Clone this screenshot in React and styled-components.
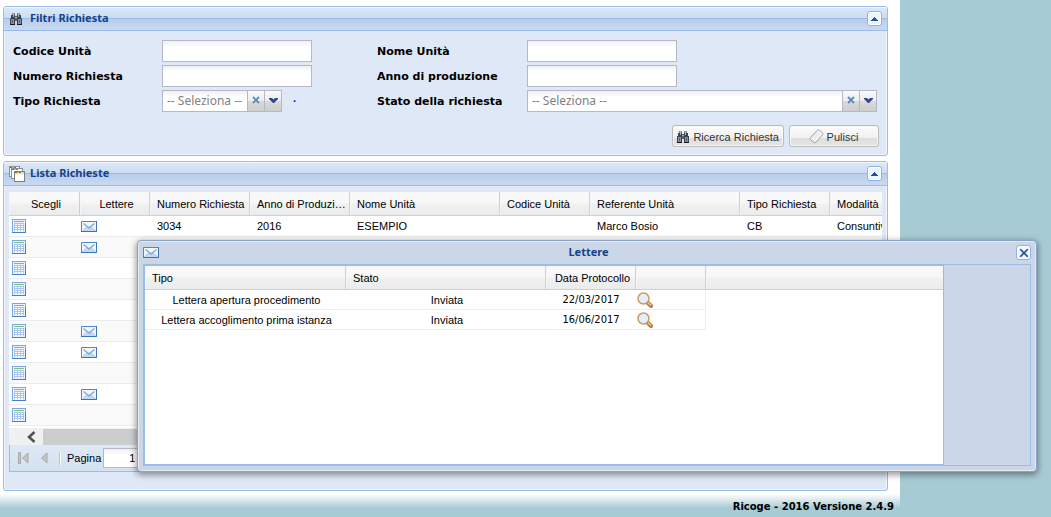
import React, { useState } from 'react';
import styled, { createGlobalStyle, css } from 'styled-components';

const GlobalStyle = createGlobalStyle`
* {
  box-sizing: border-box;
}
body {
  margin: 0;
  background-color: #a7cbd4;
  font-family: "Liberation Sans", Arial, sans-serif;
  font-size: 11px;
  color: black;
}
button, input, select {
  font-family: inherit;
  font-size: 11px;
  margin: 0;
}
`
const Page = styled.div`
position: relative;
min-height: 100vh;
`
const Column = styled.main`
display: flex;
flex-direction: column;
gap: 5px;
width: 86%;
max-width: 900px;
min-width: 900px;
padding: 6px 12px 0 3px;
background-color: white;
`
const Panel = styled.section`
border: 1px solid #99bce8;
border-radius: 3px;
background-color: #dfe8f6;
box-shadow: inset -1px -1px 0 #f2f6fc, inset 1px 0 0 #f2f6fc;
`
const PanelHeader = styled.header`
display: flex;
align-items: center;
gap: 5px;
height: 24px;
padding: 0 5px;
border-bottom: 1px solid #99bce8;
border-radius: 2px 2px 0 0;
background: linear-gradient(#dce9f8 0, #cbddf3 11px, #99bce8 11px, #99bce8 12px, #b7cdec 12px, #c9daf1 100%);
box-shadow: inset 0 1px 0 #f2f6fc;
`
const HeaderIcon = styled.span`
display: flex;
width: 16px;
`
const PanelTitle = styled.h2`
flex: 1;
margin: 0;
padding-bottom: 2px;
font: bold 11px/16px "Noto Sans", Tahoma, sans-serif;
color: #15428b;
`
const ToolButton = styled.button`
display: flex;
align-items: center;
justify-content: center;
width: 15px;
height: 15px;
padding: 0;
border: 1px solid #8db2e3;
border-radius: 3px;
background-color: #eaf5fe;
box-shadow: inset 0 0 0 1px white;
`
const FilterForm = styled.form`
padding: 9px 8px 8px 9px;
`
const FilterGrid = styled.div`
display: grid;
grid-template-columns: 149px 215px 150px 1fr;
row-gap: 3px;
padding-right: 2px;
`
const Label = styled.label`
padding-top: 2px;
font: bold 11px/20px "DejaVu Sans", Verdana, sans-serif;
`
const fieldStyle = css`
height: 22px;
border: 1px solid #b5b8c8;
background: linear-gradient(#eef0f0, white 6px);
`
const TextInput = styled.input`
${fieldStyle}
width: 150px;
padding: 1px 4px;
`
const Combo = styled.div`
display: flex;
width: ${props => props.$wide ? '100%' : '120px'};
`
const ComboSelect = styled.select`
${fieldStyle}
flex: 1;
min-width: 0;
padding: 0 4px;
border-radius: 0;
appearance: none;
font-family: "Noto Sans", Tahoma, sans-serif;
font-size: 12px;
line-height: 18px;
color: gray;
`
const Trigger = styled.button`
display: flex;
align-items: center;
justify-content: center;
width: 17px;
height: 22px;
padding: 0 0 2px;
border: 1px solid #b5b8c8;
border-left: 0;
background: linear-gradient(#fbfbfb, #ececec 10px, #dadada 10px, #cecece);
`
const Dot = styled.span`
margin-left: 11px;
font-weight: bold;
line-height: 22px;
color: #0000ff;
`
const ComboRow = styled.div`
display: flex;
`
const Actions = styled.div`
display: flex;
justify-content: flex-end;
gap: 5px;
margin-top: 13px;
`
const ActionButton = styled.button`
display: flex;
align-items: center;
justify-content: center;
gap: 3px;
height: 22px;
min-width: 90px;
padding: 1px 4px 0 3px;
border: 1px solid #bbb;
border-radius: 3px;
background: linear-gradient(#fcfcfc, #f0f0f0 12px, #dedede 12px, #e4e4e4);
box-shadow: inset 0 0 0 1px #f8f8f8;
color: #333;
white-space: nowrap;
`
const ListBody = styled.div`
padding: 6px 5px 18px;
`
const GridScroll = styled.div`
overflow: hidden;
background-color: white;
`
const Table = styled.table`
width: ${props => props.$width};
border-collapse: separate;
border-spacing: 0;
table-layout: fixed;
`
const Th = styled.th`
height: 24px;
padding: 0 3px 0 7px;
border-right: 1px solid #d0d0d0;
border-bottom: 1px solid #d0d0d0;
background: linear-gradient(#f9f9f9 0, #f7f7f7 11px, #f0f1f1 12px, #eaebec 100%);
box-shadow: inset 1px 0 0 #f6f6f6;
font-weight: normal;
text-align: ${props => props.$center ? 'center' : 'left'};
overflow: hidden;
white-space: nowrap;
text-overflow: ${props => props.$clip ? 'clip' : 'ellipsis'};
&:last-child {
  border-right: 0;
}
`
const Td = styled.td`
height: ${props => props.$height || '21px'};
padding: ${props => props.$pad || '0 5px 0 7px'};
border-bottom: 1px solid #ededed;
border-right: ${props => props.$edge ? '1px solid #ededed' : '0'};
text-align: ${props => props.$center ? 'center' : 'left'};
overflow: hidden;
white-space: nowrap;
vertical-align: middle;
svg {
  display: block;
}
`
const Tr = styled.tr`
background-color: ${props => props.$alt ? '#fafafa' : 'white'};
`
const ScrollBar = styled.div`
display: flex;
align-items: center;
height: 19px;
padding: 1px 17px;
border-top: 2px solid white;
background-color: #f0f0f0;
`
const ScrollThumb = styled.div`
width: 640px;
height: 16px;
margin-left: 7px;
background-color: #cdcdcd;
`
const Pager = styled.nav`
display: flex;
align-items: center;
height: 27px;
padding: 0 8px;
border: 1px solid #99bce8;
border-top: 0;
background: linear-gradient(#dfe9f5, #d3e1f1);
`
const PagerButton = styled.button`
display: flex;
padding: 0;
margin-right: ${props => props.$gap};
border: 0;
background: none;
`
const Separator = styled.span`
width: 2px;
height: 13px;
margin-right: 6px;
border-left: 1px solid #98c8ff;
border-right: 1px solid white;
`
const PageInput = styled.input`
${fieldStyle}
width: 36px;
height: 20px;
margin-left: 2px;
padding: 0 3px;
text-align: right;
`
const Footer = styled.footer`
width: 900px;
height: 26px;
padding: 9px 6px 0 0;
background: linear-gradient(white 3px, #a7cbd4 17px);
font: bold 10px/14px "DejaVu Sans", Verdana, sans-serif;
text-align: right;
`
const Window = styled.div`
position: absolute;
top: 240px;
left: 137px;
right: 14px;
display: flex;
flex-direction: column;
padding: 0 5px 5px;
border: 1px solid #8ba4c4;
border-radius: 4px;
background-color: #cbd7e7;
box-shadow: inset 0 0 0 1px #e3eaf4, 0 2px 6px 1px rgba(0, 0, 0, 0.4);
`
const WindowHeader = styled.header`
display: flex;
align-items: center;
height: 23px;
`
const WindowTitle = styled.h2`
flex: 1;
margin: 0;
padding: 0 0 2px 2px;
font: bold 11px/16px "Noto Sans", Tahoma, sans-serif;
text-align: center;
color: #15428b;
`
const WindowBody = styled.div`
display: flex;
border: 1px solid #99bce8;
`
const LetterGrid = styled.div`
flex: 0 1 800px;
height: 200px;
border: 1px solid #99bce8;
background-color: white;
`
const DateText = styled.span`
font-family: "DejaVu Sans Condensed", Tahoma, sans-serif;
`
const IconButton = styled.button`
display: block;
padding: 0;
border: 0;
background: none;
`

const Binoculars = () => (
  <svg width="14" height="14" viewBox="0 0 14 14" shapeRendering="crispEdges">
    <path d="M3 1h3v2H3zM8 1h3v2H8z" fill="#7d8793" />
    <path d="M2 3h4v3H2zM8 3h4v3H8zM1 6h5v7H1zM8 6h5v7H8z" fill="#3c444e" />
    <path d="M6 4h2v5H6z" fill="#59636f" />
    <path d="M4 1h1v4H4zM9 1h1v4H9zM6 5h2v1H6z" fill="#aab4bf" />
    <path d="M2 7h3v5H2zM9 7h3v5H9z" fill="#87919c" />
    <path d="M3 8h1v3H3zM10 8h1v3h-1z" fill="#5a636d" />
    <path d="M1 12h5v1H1zM8 12h5v1H8z" fill="#14181c" />
  </svg>
);

const Eraser = () => (
  <svg width="15" height="15" viewBox="0 0 15 15">
    <path d="M8.500 1.200Q9.500.5 10.300 1.200L13.500 3.700q.8.800.2 1.700L7 13.300q-1 .9-2 .2L1.300 10.500q-.8-.8-.1-1.700z" fill="#ececec" stroke="#a4a4a4" />
    <path d="M9.500 2.500l3 2.200-6.500 7.500" fill="none" stroke="#fff" />
  </svg>
);

const CardStack = () => (
  <svg width="16" height="16" viewBox="0 0 16 16" shapeRendering="crispEdges">
    <path d="M0 0h11v11H0z" fill="#8b9096" />
    <path d="M1 1h9v9H1z" fill="#fff" />
    <path d="M2 2h12v11H2z" fill="#8b9096" />
    <path d="M3 3h10v9H3z" fill="#fff" />
    <path d="M5 5h11v11H5z" fill="#7b8087" />
    <path d="M6 6h9v9H6z" fill="#fff" />
    <path d="M6 6h9v2H6z" fill="#d5dbe2" />
    <path d="M1 1h2v1H1zM3 3h2v1H3zM6 6h2v1H6z" fill="#e2412c" />
    <path d="M3 1h2v1H3zM5 3h2v1H5zM8 6h2v1H8z" fill="#e7bf38" />
    <path d="M5 1h2v1H5zM7 3h2v1H7zM10 6h2v1h-2z" fill="#46a832" />
  </svg>
);

const Mail = () => (
  <svg width="16" height="11" viewBox="0 0 16 11">
    <path d="M.5.500h15v10H.5z" fill="#f1f6fd" stroke="#4f88c7" />
    <path d="M1 10l5-4.500h4l5 4.500z" fill="#c3d9f4" />
    <path d="M2.500 2.500L8 7l5.500-4.500" fill="none" stroke="#82abdd" strokeWidth="1.500" />
    <path d="M2 9.500L5 6.500M14 9.500l-3-3" fill="none" stroke="#a8c6eb" />
    <path d="M15.500 0v10.500H0" fill="none" stroke="#3b74b8" />
  </svg>
);

const Sheet = () => (
  <svg width="14" height="14" viewBox="0 0 14 14" shapeRendering="crispEdges">
    <path d="M0 0h14v14H0z" fill="#7ba7dc" />
    <path d="M1 1h12v12H1z" fill="#eaf2fd" />
    <path d="M2 2h10v1H2z" fill="#7fc178" />
    <path d="M2 4h10v8H2z" fill="#a9c5ec" />
    <path d="M3 5h2v1H3zM6 5h2v1H6zM9 5h2v1H9zM3 7h2v1H3zM6 7h2v1H6zM9 7h2v1H9zM3 9h2v1H3zM6 9h2v1H6zM9 9h2v1H9zM3 11h2v1H3zM6 11h2v1H6zM9 11h2v1H9z" fill="#fff" />
    <path d="M0 13h14v1H0zM13 4h1v9h-1z" fill="#477fc5" />
  </svg>
);

const Magnifier = () => (
  <svg width="16" height="16" viewBox="0 0 16 16">
    <path d="M10 10l4 4" stroke="#b67a45" strokeWidth="4" strokeLinecap="round" />
    <path d="M11 10.500l3 3" stroke="#efc98b" strokeWidth="1.500" />
    <circle cx="6.500" cy="6.500" r="5.500" fill="#e4effb" stroke="#c99c62" strokeWidth="1.500" />
  </svg>
);

const UpArrow = () => (
  <svg width="7" height="4" viewBox="0 0 7 4" shapeRendering="crispEdges">
    <path d="M3 0h1v1h1v1h1v1h1v1H0V3h1V2h1V1h1z" fill="#2b4fa0" />
  </svg>
);

const Cross = ({ size, color, weight }) => (
  <svg width={size} height={size} viewBox="0 0 8 8">
    <path d="M1 1l6 6M7 1L1 7" stroke={color} strokeWidth={weight} />
  </svg>
);

const Chevron = () => (
  <svg width="9" height="5" viewBox="0 0 9 5">
    <path d="M0 0h3l1.500 1.500L6 0h3v1L5 5H4L0 1z" fill="#2b4a87" />
  </svg>
);

const columns = [
  { title: 'Scegli', width: 71, center: true },
  { title: 'Lettere', width: 70, center: true },
  { title: 'Numero Richiesta', width: 100, clip: true },
  { title: 'Anno di Produzione', width: 100 },
  { title: 'Nome Unità', width: 150 },
  { title: 'Codice Unità', width: 90 },
  { title: 'Referente Unità', width: 150 },
  { title: 'Tipo Richiesta', width: 90 },
  { title: 'Modalità', width: 120 },
];

const requests = [
  { id: 1, mail: true, values: ['3034', '2016', 'ESEMPIO', '', 'Marco Bosio', 'CB', 'Consuntivo'] },
  { id: 2, mail: true },
  { id: 3 },
  { id: 4 },
  { id: 5 },
  { id: 6, mail: true },
  { id: 7, mail: true },
  { id: 8 },
  { id: 9, mail: true },
  { id: 10 },
];

const letters = [
  { type: 'Lettera apertura procedimento', state: 'Inviata', date: '22/03/2017' },
  { type: 'Lettera accoglimento prima istanza', state: 'Inviata', date: '16/06/2017' },
];

const SelectField = ({ id, wide }) => (
  <Combo $wide={wide}>
    <ComboSelect id={id}>
      <option>-- Seleziona --</option>
    </ComboSelect>
    <Trigger type="button" aria-label="Annulla selezione"><Cross size={8} color="#5a8cc4" weight="1.800" /></Trigger>
    <Trigger type="button" aria-label="Apri elenco"><Chevron /></Trigger>
  </Combo>
);

const Filters = () => (
  <Panel>
    <PanelHeader>
      <HeaderIcon><Binoculars /></HeaderIcon>
      <PanelTitle>Filtri Richiesta</PanelTitle>
      <ToolButton aria-label="Comprimi"><UpArrow /></ToolButton>
    </PanelHeader>
    <FilterForm onSubmit={e => e.preventDefault()}>
      <FilterGrid>
        <Label htmlFor="codice">Codice Unità</Label>
        <TextInput id="codice" />
        <Label htmlFor="nome">Nome Unità</Label>
        <TextInput id="nome" />
        <Label htmlFor="numero">Numero Richiesta</Label>
        <TextInput id="numero" />
        <Label htmlFor="anno">Anno di produzione</Label>
        <TextInput id="anno" />
        <Label htmlFor="tipo">Tipo Richiesta</Label>
        <ComboRow>
          <SelectField id="tipo" />
          <Dot>·</Dot>
        </ComboRow>
        <Label htmlFor="stato">Stato della richiesta</Label>
        <SelectField id="stato" wide />
      </FilterGrid>
      <Actions>
        <ActionButton><Binoculars />Ricerca Richiesta</ActionButton>
        <ActionButton type="reset"><Eraser />Pulisci</ActionButton>
      </Actions>
    </FilterForm>
  </Panel>
);

const RequestList = () => (
  <Panel>
    <PanelHeader>
      <HeaderIcon><CardStack /></HeaderIcon>
      <PanelTitle>Lista Richieste</PanelTitle>
      <ToolButton aria-label="Comprimi"><UpArrow /></ToolButton>
    </PanelHeader>
    <ListBody>
      <GridScroll>
        <Table $width="941px">
          <colgroup>
            {columns.map(c => <col key={c.title} width={c.width} />)}
          </colgroup>
          <thead>
            <tr>
              {columns.map(c => <Th key={c.title} $center={c.center} $clip={c.clip}>{c.title}</Th>)}
            </tr>
          </thead>
          <tbody>
            {requests.map((r, i) => (
              <Tr key={r.id} $alt={i % 2 === 1}>
                <Td $pad="0 3px"><IconButton aria-label="Scegli"><Sheet /></IconButton></Td>
                <Td $pad="0 1px">{r.mail && <IconButton aria-label="Lettere"><Mail /></IconButton>}</Td>
                {columns.slice(2).map((c, j) => <Td key={c.title}>{r.values && r.values[j]}</Td>)}
              </Tr>
            ))}
          </tbody>
        </Table>
      </GridScroll>
      <ScrollBar>
        <svg width="10" height="12" viewBox="0 0 10 12">
          <path d="M8.500 1L3 6l5.500 5" fill="none" stroke="#505050" strokeWidth="2.500" />
        </svg>
        <ScrollThumb />
      </ScrollBar>
      <Pager>
        <PagerButton $gap="12px" aria-label="Prima pagina">
          <svg width="11" height="12" viewBox="0 0 11 12">
            <path d="M.5.500h2v11h-2z" fill="#c8c8c8" stroke="#a8a8a8" />
            <path d="M10 1v10L4.500 6z" fill="#c4c4c4" stroke="#a8a8a8" />
          </svg>
        </PagerButton>
        <PagerButton $gap="11px" aria-label="Pagina precedente">
          <svg width="7" height="12" viewBox="0 0 7 12">
            <path d="M6 1v10L.5 6z" fill="#c4c4c4" stroke="#a8a8a8" />
          </svg>
        </PagerButton>
        <Separator />
        <label htmlFor="pagina">Pagina</label>
        <PageInput id="pagina" defaultValue="1" />
      </Pager>
    </ListBody>
  </Panel>
);

const LettersWindow = ({ onClose }) => (
  <Window role="dialog" aria-labelledby="lettere-title">
    <WindowHeader>
      <Mail />
      <WindowTitle id="lettere-title">Lettere</WindowTitle>
      <ToolButton aria-label="Chiudi" onClick={onClose}><Cross size={10} color="#2b4fa0" weight="1.400" /></ToolButton>
    </WindowHeader>
    <WindowBody>
      <LetterGrid>
        <Table $width="100%">
          <colgroup>
            <col width="201" />
            <col width="200" />
            <col width="90" />
            <col width="70" />
            <col />
          </colgroup>
          <thead>
            <tr>
              <Th>Tipo</Th>
              <Th>Stato</Th>
              <Th $center>Data Protocollo</Th>
              <Th />
              <Th />
            </tr>
          </thead>
          <tbody>
            {letters.map(l => (
              <tr key={l.date}>
                <Td $center $height="20px">{l.type}</Td>
                <Td $center $height="20px">{l.state}</Td>
                <Td $center $pad="0 6px" $height="20px"><DateText>{l.date}</DateText></Td>
                <Td $pad="0 1px" $edge $height="20px"><IconButton aria-label="Visualizza"><Magnifier /></IconButton></Td>
              </tr>
            ))}
          </tbody>
        </Table>
      </LetterGrid>
    </WindowBody>
  </Window>
);

const App = () => {
  const [open, setOpen] = useState(true);
  return (
    <Page>
      <GlobalStyle />
      <Column>
        <Filters />
        <RequestList />
      </Column>
      <Footer>Ricoge - 2016 Versione 2.4.9</Footer>
      {open && <LettersWindow onClose={() => setOpen(false)} />}
    </Page>
  );
}

export default App;
